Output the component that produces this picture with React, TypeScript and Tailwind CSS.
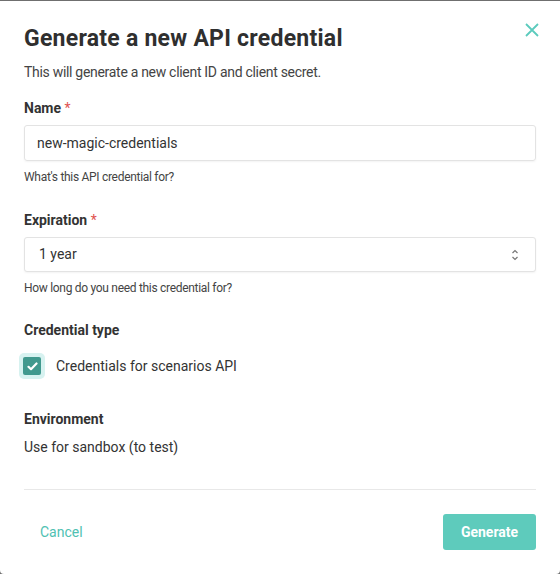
import React, { useState } from 'react';

const App: React.FC = () => {
  const [name, setName] = useState('new-magic-credentials');
  const [expiration, setExpiration] = useState('1 year');
  const [scenarios, setScenarios] = useState(true);

  return (
    <div className="min-h-screen bg-[#6f6f6f] pt-px" style={{ fontFamily: 'Roboto, "Noto Sans", sans-serif' }}>
      <div className="relative h-[573px] w-full rounded-b-[4px] bg-white px-6 text-[#333]">
        {/* Close */}
        <button className="absolute right-[20px] top-[21px] text-[#5ccbbd]">
          <svg width="16" height="16" viewBox="0 0 16 16" fill="none" stroke="currentColor" strokeWidth="1.8">
            <path d="M2 2 L14 14 M14 2 L2 14" />
          </svg>
        </button>

        {/* Header */}
        <h1 className="pt-[24px] text-[23px] font-bold leading-[28px] tracking-[0.25px] text-[#2f2f2f]">
          Generate a new API credential
        </h1>
        <p className="mt-[9px] text-[14px] leading-[20px] tracking-[-0.3px] text-[#444]">
          This will generate a new client ID and client secret.
        </p>

        {/* Name */}
        <label className="mt-[16px] block text-[14px] font-bold leading-[20px]">
          Name <span className="font-normal text-[#e0524f]">*</span>
        </label>
        <input
          value={name}
          onChange={(e) => setName(e.target.value)}
          className="mt-[7px] h-[36px] w-full rounded-[3px] border border-[#e3e3e3] px-3 text-[14px] text-[#333] shadow-[0_1px_2px_rgba(0,0,0,0.05)] outline-none"
        />
        <p className="mt-[8px] text-[12px] leading-[16px] tracking-[-0.3px] text-[#444]">What's this API credential for?</p>

        {/* Expiration */}
        <label className="mt-[25px] block text-[14px] font-bold leading-[20px]">
          Expiration <span className="font-normal text-[#e0524f]">*</span>
        </label>
        <div className="relative mt-[7px]">
          <select
            value={expiration}
            onChange={(e) => setExpiration(e.target.value)}
            className="h-[35px] w-full appearance-none rounded-[3px] border border-[#e3e3e3] bg-white px-[14px] text-[14px] text-[#333] shadow-[0_1px_2px_rgba(0,0,0,0.05)] outline-none"
          >
            <option>1 month</option>
            <option>6 months</option>
            <option>1 year</option>
          </select>
          <svg
            className="pointer-events-none absolute right-[16px] top-[11px]"
            width="10"
            height="14"
            viewBox="0 0 10 14"
            fill="none"
            stroke="#777"
            strokeWidth="1.2"
          >
            <path d="M2.5 5 L5 2.5 L7.5 5" />
            <path d="M2.5 9 L5 11.5 L7.5 9" />
          </svg>
        </div>
        <p className="mt-[8px] text-[12px] leading-[16px] tracking-[-0.3px] text-[#444]">
          How long do you need this credential for?
        </p>

        {/* Credential type */}
        <h3 className="mt-[24px] text-[14px] font-bold leading-[20px]">Credential type</h3>
        <label className="mt-[13px] flex cursor-pointer items-center gap-[11px]">
          <span className="-ml-[5px] flex h-[26px] w-[26px] items-center justify-center rounded-[5px] bg-[#d7f2f0]">
            <span
              onClick={() => setScenarios(!scenarios)}
              className={`flex h-[18px] w-[18px] items-center justify-center rounded-[2px] ${
                scenarios ? 'bg-[#41998e]' : 'border border-[#ccc] bg-white'
              }`}
            >
              {scenarios && (
                <svg width="11" height="9" viewBox="0 0 11 9" fill="none" stroke="white" strokeWidth="2.2" strokeLinecap="round" strokeLinejoin="round">
                  <path d="M1.5 4.8 L4 7.2 L9.5 1.5" />
                </svg>
              )}
            </span>
          </span>
          <span className="text-[14px] leading-[20px] text-[#333]">Credentials for scenarios API</span>
        </label>

        {/* Environment */}
        <h3 className="mt-[30px] text-[14px] font-bold leading-[20px]">Environment</h3>
        <p className="mt-[8px] text-[14px] leading-[20px] text-[#333]">Use for sandbox (to test)</p>

        {/* Footer */}
        <div className="mt-[32px] border-t border-[#e8e8e8]" />
        <div className="mt-[24px] flex items-center justify-between">
          <button className="ml-4 text-[14px] text-[#4fc1b2]">Cancel</button>
          <button className="h-[36px] w-[93px] rounded-[3px] bg-[#5ecbbc] text-[14px] font-bold text-white">Generate</button>
        </div>
      </div>
    </div>
  );
};

export default App;
